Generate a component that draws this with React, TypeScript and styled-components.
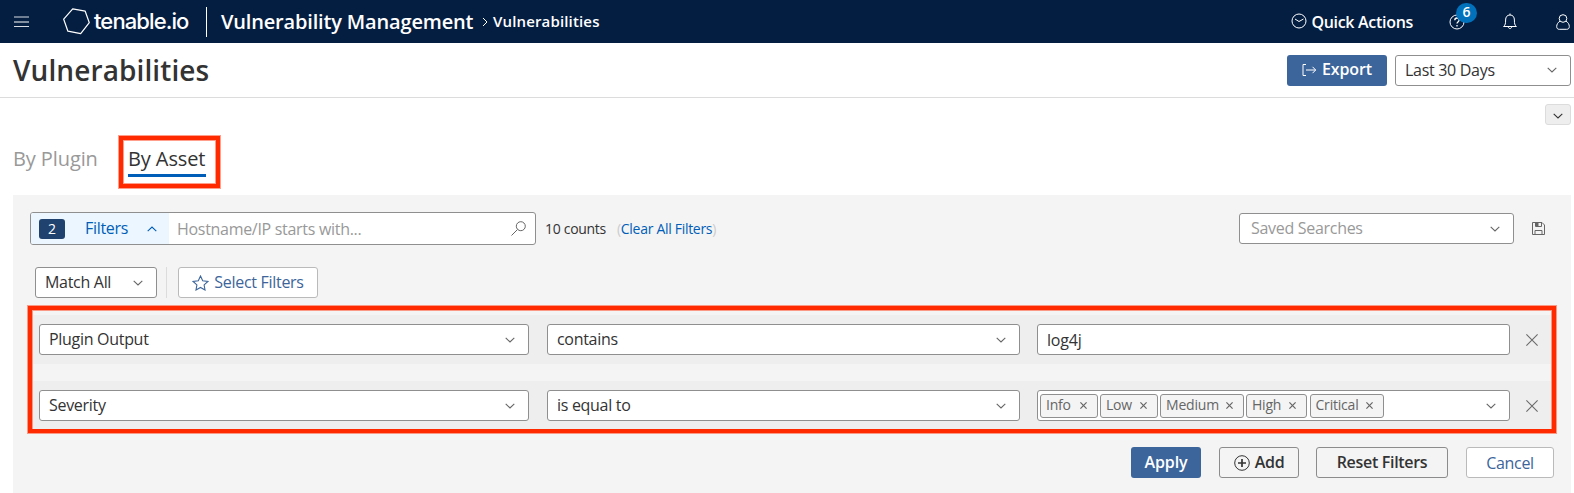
import React from "react";
import styled, { createGlobalStyle, css } from "styled-components";

const Global = createGlobalStyle`
  *, *::before, *::after { box-sizing: border-box; }
  body {
    margin: 0;
    background: #fff;
    color: #333;
    font-family: "Open Sans", "Liberation Sans", sans-serif;
    overflow: hidden;
  }
  button, input { font: inherit; color: inherit; margin: 0; }
  svg { display: block; flex: none; }
`;

const Label = styled.span<{ $w?: number; $size?: number; $weight?: number; $ls?: number; $dy?: number; $color?: string }>`
  display: block;
  flex: none;
  white-space: nowrap;
  width: ${(p) => (p.$w ? `${p.$w}px` : "auto")};
  font-size: ${(p) => p.$size ?? 16}px;
  font-weight: ${(p) => p.$weight ?? "inherit"};
  letter-spacing: ${(p) => p.$ls ?? -0.3}px;
  color: ${(p) => p.$color ?? "inherit"};
  line-height: 22px;
  margin-top: ${(p) => p.$dy ?? -1}px;
`;

const Page = styled.div`
  width: 1574px;
  height: 493px;
  overflow: hidden;
  display: flex;
  flex-direction: column;
`;

const TopBar = styled.header`
  height: 43px;
  flex: none;
  background: #041e42;
  color: #fff;
  display: flex;
  align-items: center;
  padding: 0 4px 0 14px;
`;

const Logo = styled.div`
  display: flex;
  align-items: center;
  margin-left: 34px;
  width: 143px;
`;

const LogoText = styled.span`
  font-family: Inter, "Liberation Sans", sans-serif;
  font-size: 22px;
  font-weight: 500;
  letter-spacing: -0.9px;
  line-height: 24px;
  margin: -2px 0 0 4px;
  white-space: nowrap;
`;

const Divider = styled.div`
  width: 1px;
  height: 30px;
  background: #fff;
  margin-right: 14px;
`;

const Crumbs = styled.nav`
  display: flex;
  align-items: center;
`;

const TopActions = styled.div`
  margin-left: auto;
  display: flex;
  align-items: center;
`;

const QuickActions = styled.div`
  display: flex;
  align-items: center;
  gap: 4px;
  margin-right: 36px;
  svg { margin-top: -2px; }
`;

const HelpWrap = styled.div`
  position: relative;
  margin-right: 38px;
`;

const HelpBadge = styled.span`
  position: absolute;
  left: 7px;
  top: -11px;
  width: 21px;
  height: 20px;
  border-radius: 10px;
  background: #0071ba;
  font-size: 14px;
  font-weight: 600;
  line-height: 18px;
  text-align: center;
`;

const TitleBar = styled.div`
  height: 55px;
  flex: none;
  display: flex;
  align-items: center;
  justify-content: space-between;
  border-bottom: 1px solid #dcdcdc;
  padding: 0 3px 0 13px;
`;

const Title = styled.h1`
  margin: -1px 0 0;
  font-size: 28px;
  font-weight: 600;
  letter-spacing: 0.1px;
  line-height: 40px;
`;

const TitleActions = styled.div`
  display: flex;
  gap: 8px;
`;

const Button = styled.button<{ $w: number; $kind?: "primary" | "outline" | "plain" }>`
  width: ${(p) => p.$w}px;
  height: 31px;
  padding: 0;
  display: flex;
  align-items: center;
  justify-content: center;
  gap: 5px;
  border-radius: 3px;
  font-weight: 600;
  ${(p) =>
    p.$kind === "primary"
      ? css`background: #3c659b; color: #fff; border: 0;`
      : p.$kind === "outline"
      ? css`background: #f4f4f4; color: #333; border: 1px solid #8c8c8c;`
      : css`background: #fff; color: #3c659b; border: 1px solid #bababa; font-weight: 400;`}
`;

const SelectBox = styled.div<{ $w: number; $pr?: number; $pl?: number }>`
  width: ${(p) => p.$w}px;
  height: 31px;
  flex: none;
  display: flex;
  align-items: center;
  justify-content: space-between;
  background: #fff;
  border: 1px solid #8f8f8f;
  border-radius: 3px;
  padding: 0 ${(p) => p.$pr ?? 13}px 0 ${(p) => p.$pl ?? 9}px;
`;

const CollapseRow = styled.div`
  display: flex;
  justify-content: flex-end;
  padding: 6px 3px 0 0;
`;

const CollapseButton = styled.button`
  width: 26px;
  height: 21px;
  padding: 2px 0 0;
  display: flex;
  align-items: center;
  justify-content: center;
  background: #eee;
  border: 1px solid #dcdcdc;
  border-radius: 3px;
`;

const Tabs = styled.div`
  height: 70px;
  flex: none;
  display: flex;
  align-items: flex-start;
  padding: 11px 0 0 13px;
`;

const Tab = styled.span<{ $active?: boolean; $w: number }>`
  display: block;
  width: ${(p) => p.$w}px;
  margin-top: 8px;
  height: 33px;
  font-size: 20px;
  letter-spacing: -0.1px;
  line-height: 29px;
  white-space: nowrap;
  color: ${(p) => (p.$active ? "#333" : "#999")};
  border-bottom: 3px solid ${(p) => (p.$active ? "#005eb8" : "transparent")};
`;

const highlight = css`
  border: 4px solid #ff2a00;
  box-shadow: 0 0 0 1px rgba(255, 42, 0, 0.45), inset 0 0 0 1px rgba(255, 42, 0, 0.45);
`;

const TabHighlight = styled.div`
  ${highlight}
  margin-left: 22px;
  width: 101px;
  height: 52px;
  padding: 4px 0 0 5px;
  ${Tab} { margin-top: 0; }
`;

const Panel = styled.main`
  width: 1558px;
  margin-left: 13px;
  flex: 1;
  background: #f4f4f4;
  padding-top: 17px;
`;

const SearchRow = styled.div`
  display: flex;
  align-items: center;
  height: 33px;
  padding: 0 26px 0 17px;
`;

const SearchField = styled.div`
  width: 506px;
  height: 33px;
  display: flex;
  align-items: center;
  background: #fff;
  border: 1px solid #8f8f8f;
  border-radius: 3px;
  padding-right: 9px;
  overflow: hidden;
  > svg { margin-left: auto; }
`;

const FiltersToggle = styled.div`
  width: 138px;
  height: 31px;
  flex: none;
  display: flex;
  align-items: center;
  background: #ebf6ff;
  color: #005eb8;
  padding-left: 8px;
`;

const CountBadge = styled.span`
  width: 26px;
  height: 20px;
  margin-right: 20px;
  border-radius: 3px;
  background: #20426f;
  color: #fff;
  font-size: 14px;
  line-height: 19px;
  text-align: center;
`;

const SavedGroup = styled.div`
  margin-left: auto;
  display: flex;
  align-items: center;
  gap: 18px;
`;

const MatchRow = styled.div`
  display: flex;
  align-items: center;
  height: 31px;
  margin-top: 22px;
  padding-left: 22px;
`;

const MatchDivider = styled.div`
  width: 1px;
  height: 31px;
  margin: 0 11px 0 9px;
  background: #dcdcdc;
`;

const FiltersHighlight = styled.section`
  ${highlight}
  width: 1528px;
  height: 127px;
  margin: 8px 0 0 15px;
  padding: 5px 1px 0;
  overflow: hidden;
`;

const FilterRow = styled.div`
  display: flex;
  align-items: center;
  height: 49px;
  margin-bottom: 17px;
  padding-left: 6px;
  background: #eee;
`;

const Gap = styled.span<{ $w: number }>`
  flex: none;
  width: ${(p) => p.$w}px;
`;

const Tags = styled.div`
  display: flex;
  gap: 2.5px;
`;

const Tag = styled.span<{ $w: number }>`
  width: ${(p) => p.$w}px;
  height: 24px;
  display: flex;
  align-items: center;
  justify-content: space-between;
  background: #f4f4f4;
  border: 1px solid #8f8f8f;
  border-radius: 3px;
  padding: 0 10px 0 5px;
  color: #666;
`;

const Footer = styled.div`
  display: flex;
  justify-content: flex-end;
  padding: 14px 17px 0 0;
`;

const Chevron = ({ up, color = "#666" }: { up?: boolean; color?: string }) => (
  <svg width="10" height="6" viewBox="0 0 10 6" fill="none" stroke={color} strokeWidth="1.1">
    <path d={up ? "M.7 5.2 5 1l4.3 4.2" : "M.7.8 5 5 9.3.8"} />
  </svg>
);

const Cross = ({ size, width = 1.1, color = "#6a6a6a" }: { size: number; width?: number; color?: string }) => (
  <svg width={size} height={size} viewBox={`0 0 ${size} ${size}`} stroke={color} strokeWidth={width}>
    <path d={`M.4.4 ${size - 0.4} ${size - 0.4}M${size - 0.4}.4.4 ${size - 0.4}`} />
  </svg>
);

const tags: [string, number][] = [
  ["Info", 57.5],
  ["Low", 57.5],
  ["Medium", 83.5],
  ["High", 61],
  ["Critical", 74.5],
];

export default function App() {
  return (
    <Page>
      <Global />
      <TopBar>
        <svg width="15" height="12" viewBox="0 0 15 12" stroke="#fff" strokeWidth="1">
          <path d="M0 1h15M0 10.500h15" opacity=".85" />
          <path d="M0 6h15" />
        </svg>
        <Logo>
          <svg width="27" height="27" viewBox="0 0 27 27" fill="none" stroke="#fff" strokeWidth="1.2" strokeLinejoin="round">
            <path d="M9.700.800 22.200 3.200 26.300 14.700 17.700 25.700 4.900 23.200.700 11.200z" />
          </svg>
          <LogoText>tenable.io</LogoText>
        </Logo>
        <Divider />
        <Crumbs>
          <Label $size={20} $weight={600} $ls={-0.17} $w={253} $dy={0}>Vulnerability Management</Label>
          <Gap $w={8} />
          <svg width="6" height="10" viewBox="0 0 6 10" fill="none" stroke="#fff"><path d="m1 1 4 4-4 4" /></svg>
          <Gap $w={5} />
          <Label $size={15} $weight={600} $ls={0.15}>Vulnerabilities</Label>
        </Crumbs>
        <TopActions>
          <QuickActions>
            <svg width="16" height="16" viewBox="0 0 16 16" fill="none" stroke="#fff">
              <circle cx="8" cy="8" r="7" /><path d="m4 6 4 2.5L12.5 6" />
            </svg>
            <Label $weight={600} $dy={1}>Quick Actions</Label>
          </QuickActions>
          <HelpWrap>
            <svg width="16" height="16" viewBox="0 0 16 16" fill="none" stroke="#fff">
              <circle cx="8" cy="8" r="7" />
              <path d="M5.8 6.2c0-3 4.4-2.8 4.4-.2C10.200 7.700 8 7.700 8 9.600M8 11v1.400" strokeWidth="1.3" />
            </svg>
            <HelpBadge>6</HelpBadge>
          </HelpWrap>
          <svg width="14" height="17" viewBox="0 0 14 17" fill="none" stroke="#fff">
            <path d="M.6 13.500c1.800-1.500 2-3 2-6.500 0-3 1.500-5 4.400-5s4.400 2 4.400 5c0 3.500.2 5 2 6.500zM7 2V.5M5.300 14c.3 2 3.100 2 3.400 0" />
          </svg>
          <Gap $w={39} />
          <svg width="14" height="16" viewBox="0 0 14 16" fill="none" stroke="#fff">
            <circle cx="7" cy="4.500" r="3.800" />
            <path d="M4 7.200C1.800 8.400.7 10.500.7 12.500c0 2 1 2.800 2.600 2.800h7.400c1.600 0 2.600-.8 2.600-2.800 0-2-1.100-4.100-3.300-5.300" />
          </svg>
        </TopActions>
      </TopBar>

      <TitleBar>
        <Title>Vulnerabilities</Title>
        <TitleActions>
          <Button $w={100} $kind="primary">
            <svg width="15" height="12" viewBox="0 0 15 12" fill="none" stroke="#fff">
              <path d="M4 .5H1v11h3M4 6h9.500M10.500 2.800 13.700 6l-3.200 3.200" />
            </svg>
            <Label $ls={-0.1} $dy={-2}>Export</Label>
          </Button>
          <SelectBox $w={176}><Label>Last 30 Days</Label><Chevron /></SelectBox>
        </TitleActions>
      </TitleBar>

      <CollapseRow>
        <CollapseButton><Chevron color="#333" /></CollapseButton>
      </CollapseRow>

      <Tabs>
        <Tab $w={84}>By Plugin</Tab>
        <TabHighlight><Tab $active $w={78}>By Asset</Tab></TabHighlight>
      </Tabs>

      <Panel>
        <SearchRow>
          <SearchField>
            <FiltersToggle>
              <CountBadge>2</CountBadge>
              <Label $w={62}>Filters</Label>
              <Chevron up color="#005eb8" />
            </FiltersToggle>
            <Gap $w={8} />
            <Label $color="#999" $dy={1}>Hostname/IP starts with...</Label>
            <svg width="15" height="15" viewBox="0 0 15 15" fill="none" stroke="#666">
              <circle cx="9.800" cy="5.200" r="4.500" /><path d="M6.500 8.500.5 14.500" />
            </svg>
          </SearchField>
          <Gap $w={9} />
          <Label $size={14} $w={72} $dy={1}>10 counts</Label>
          <Label $size={14} $color="#ccc" $dy={1}>(</Label>
          <Label $size={14} $color="#005eb8" $dy={1}>Clear All Filters</Label>
          <Label $size={14} $color="#ccc" $dy={1}>)</Label>
          <SavedGroup>
            <SelectBox $w={275} $pl={11}><Label $color="#999">Saved Searches</Label><Chevron /></SelectBox>
            <svg width="13" height="13" viewBox="0 0 13 13" fill="none" stroke="#666">
              <path d="M.5.500h9.500l2.500 2.500v9.500H.500zM3 12.500V8.500h7v4M3.500.500v4h6v-4" />
              <path d="M4 1h2.500v3H4z" fill="#666" stroke="none" />
            </svg>
          </SavedGroup>
        </SearchRow>

        <MatchRow>
          <SelectBox $w={122}><Label>Match All</Label><Chevron /></SelectBox>
          <MatchDivider />
          <Button $w={140}>
            <svg width="17" height="16" viewBox="0 0 17 16" fill="none" stroke="#3c659b" strokeWidth="1.1">
              <path d="m8.500 1 2.200 4.700 5.200.7-3.800 3.500.9 5.100-4.500-2.500L4 15l.9-5.100L1.100 6.400l5.200-.7z" />
            </svg>
            <Label>Select Filters</Label>
          </Button>
        </MatchRow>

        <FiltersHighlight>
          <FilterRow>
            <SelectBox $w={490}><Label>Plugin Output</Label><Chevron /></SelectBox>
            <Gap $w={18} />
            <SelectBox $w={473}><Label>contains</Label><Chevron /></SelectBox>
            <Gap $w={17} />
            <SelectBox $w={473}><Label $dy={1} $ls={-0.2}>log4j</Label></SelectBox>
            <Gap $w={16} />
            <Cross size={12} />
          </FilterRow>
          <FilterRow>
            <SelectBox $w={490}><Label>Severity</Label><Chevron /></SelectBox>
            <Gap $w={18} />
            <SelectBox $w={473}><Label>is equal to</Label><Chevron /></SelectBox>
            <Gap $w={17} />
            <SelectBox $w={473} $pl={2}>
              <Tags>
                {tags.map(([name, w]) => (
                  <Tag key={name} $w={w}><Label $size={14} $ls={-0.2} $dy={-2}>{name}</Label><Cross size={7} width={1.2} color="#666" /></Tag>
                ))}
              </Tags>
              <Chevron />
            </SelectBox>
            <Gap $w={16} />
            <Cross size={12} />
          </FilterRow>
        </FiltersHighlight>

        <Footer>
          <Button $w={70} $kind="primary"><Label $ls={-0.1}>Apply</Label></Button>
          <Gap $w={18} />
          <Button $w={80} $kind="outline">
            <svg width="16" height="16" viewBox="0 0 16 16" fill="none" stroke="#333">
              <circle cx="8" cy="8" r="7.300" /><path d="M8 4v8M4 8h8" strokeWidth="1.700" />
            </svg>
            <Label>Add</Label>
          </Button>
          <Gap $w={17} />
          <Button $w={132} $kind="outline"><Label>Reset Filters</Label></Button>
          <Gap $w={18} />
          <Button $w={88}><Label $dy={1}>Cancel</Label></Button>
        </Footer>
      </Panel>
    </Page>
  );
}
